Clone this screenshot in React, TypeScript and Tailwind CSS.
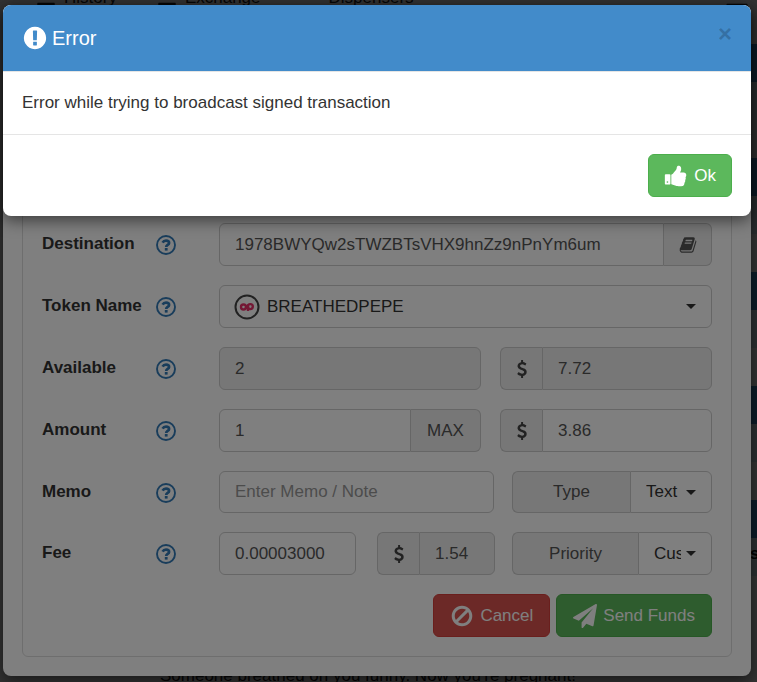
import type { ReactNode } from "react";
import { FaBars } from "react-icons/fa";

const paths = {
  exclamation:
    "M896 128q209 0 385.500 103t279.500 279.500 103 385.500-103 385.500-279.500 279.500-385.500 103-385.500-103-279.500-279.500-103-385.500 103-385.500 279.500-279.500 385.500-103zm128 1247v-190q0-14-9-23.500t-22-9.500h-192q-13 0-23 10t-10 23v190q0 13 10 23t23 10h192q13 0 22-9.500t9-23.500zm-2-344l18-621q0-12-10-18-10-8-24-8h-220q-14 0-24 8-10 6-10 18l17 621q0 10 10 17.500t24 7.500h185q14 0 23.500-7.500t10.500-17.500z",
  thumbsUp:
    "M320 1344q0-26-19-45t-45-19q-27 0-45.500 19t-18.500 45q0 27 18.500 45.500t45.500 18.500q26 0 45-18.500t19-45.500zm160-512v640q0 26-19 45t-45 19h-288q-26 0-45-19t-19-45v-640q0-26 19-45t45-19h288q26 0 45 19t19 45zm1184 0q0 86-55 149 15 44 15 76 3 76-43 137 17 56 0 117-15 57-54 94 9 112-49 181-64 76-197 78h-129q-66 0-144-15.500t-121.500-29-120.500-39.500q-123-43-158-44-26-1-45-19.500t-19-44.500v-641q0-25 18-43.500t43-20.500q24-2 76-59t101-121q68-87 101-120 18-18 31-48t17.500-48.500 13.500-60.500q7-39 12.500-61t19.500-52 34-50q19-19 45-19 46 0 82.500 10.500t60 26 40 40.500 24 45 12 50 5 45 .5 39q0 38-9.500 76t-19 60-27.500 56q-3 6-10 18t-11 22-8 24h277q78 0 135 57t57 135z",
  book:
    "M1703 478q40 57 18 129l-275 906q-19 64-76.500 107.500t-122.500 43.500h-923q-77 0-148.500-53.500t-99.500-131.500q-24-67-2-127 0-4 3-27t4-37q1-8-3-21.500t-3-19.500q2-11 8-21t16.500-23.500 16.500-23.500q23-38 45-91.500t30-91.500q3-10 .5-30t-.5-28q3-11 17-28t17-23q21-36 42-92t25-90q1-9-2.500-32t.5-28q4-13 22-30.500t22-22.500q19-26 42.500-84.500t27.500-96.500q1-8-3-25.500t-2-26.500q2-8 9-18t18-23 17-21q8-12 16.500-30.500t15-35 16-36 19.500-32 26.500-23.500 36-11.500 47.500 5.500l-1 3q38-9 51-9h761q74 0 114 56t18 130l-274 906q-36 119-71.500 153.500t-128.500 34.500h-869q-27 0-38 15-11 16-1 43 24 70 144 70h923q29 0 56-15.500t35-41.500l300-987q7-22 5-57 38 15 59 43zm-1064 2q-4 13 2 22.500t20 9.500h608q13 0 25.500-9.500t16.500-22.500l21-64q4-13-2-22.500t-20-9.500h-608q-13 0-25.500 9.500t-16.500 22.500zm-83 256q-4 13 2 22.500t20 9.500h608q13 0 25.500-9.500t16.500-22.500l21-64q4-13-2-22.500t-20-9.500h-608q-13 0-25.500 9.500t-16.500 22.500z",
  plane:
    "M1764 11q33 24 27 64l-256 1536q-5 29-32 45-14 8-31 8-11 0-24-5l-453-185-242 295q-18 23-49 23-13 0-22-4-19-7-30.500-23.500t-11.500-36.500v-349l864-1059-1069 925-395-162q-37-14-40-55-2-40 32-59l1664-960q15-9 32-9 20 0 36 11z",
  ban:
    "M1440 893q0-161-87-295l-754 753q137 89 297 89 111 0 211.500-43.500t173.500-116.500 116-174.500 43-212.500zm-999 299l755-754q-135-91-300-91-148 0-273 73t-198 199-73 274q0 162 89 299zm1223-299q0 157-61 300t-163.500 246-245 164-298.500 61-298.500-61-245-164-163.500-246-61-300 61-299.500 163.500-245.500 245-164 298.500-61 298.500 61 245 164 163.500 245.500 61 299.500z",
  dollar:
    "M1362 1185q0 153-99.500 263.500t-258.500 136.500v175q0 14-9 23t-23 9h-135q-13 0-22.500-9.500t-9.500-22.500v-175q-66-9-127.500-31t-101.500-44.500-74-48-46.500-37.500-17.500-18q-17-21-2-41l103-135q7-10 23-12 15-2 24 9l2 2q113 99 243 125 37 8 74 8 81 0 142.500-43t61.500-122q0-28-15-53t-33.500-42-58.500-37.500-66-32-80-32.500q-39-16-61.500-25t-61.500-26.500-62.500-31-56.500-35.500-53.500-42.500-43.500-49-35.500-58-21-66.500-8.500-78q0-138 98-242t255-134v-180q0-13 9.500-22.500t22.500-9.500h135q14 0 23 9t9 23v176q57 6 110.500 23t87 33.500 63.500 37.500 39 29 15 14q17 18 5 38l-81 146q-8 15-23 16-14 3-27-7-3-3-14.500-12t-39-26.500-58.500-32-74.500-26-85.500-11.500q-95 0-155 43t-60 111q0 26 8.500 48t29.500 41.500 39.500 33 56 31 60.500 27 70 27.500q53 20 81 31.500t76 35 75.500 42.500 62 50 53 63.500 31.500 76.500 13 94z",
};

const inputClass =
  "h-full w-full min-w-0 border border-[#ccc] px-[15px] text-[#555] placeholder-[#999] outline-none";
const addonClass =
  "flex shrink-0 items-center justify-center border border-[#ccc] bg-[#eee] text-[#555]";
const selectClass =
  "h-full w-full appearance-none border border-[#ccc] bg-white text-[#333] outline-none";

function Icon({ name, className }: { name: keyof typeof paths; className: string }) {
  return (
    <svg viewBox="0 0 1792 1792" fill="currentColor" className={className} aria-hidden="true">
      <path d={paths[name]} />
    </svg>
  );
}

function HelpIcon() {
  return (
    <svg viewBox="0 0 20 20" className="h-5 w-5 text-[#337ab7]" aria-hidden="true">
      <circle cx="10" cy="10" r="9" fill="none" stroke="currentColor" strokeWidth="1.9" />
      <path
        d="M6.600 7.700C7.400 6.100 8.600 5.600 10 5.600c1.700 0 3.100 1 3.100 2.300 0 2-2.900 2-2.900 4"
        fill="none"
        stroke="currentColor"
        strokeWidth="2.700"
      />
      <rect x="8.800" y="13" width="2.800" height="2.600" fill="currentColor" />
    </svg>
  );
}

function Caret() {
  return (
    <svg
      viewBox="0 0 10 5"
      className="pointer-events-none absolute top-[19px] right-4 h-[5px] w-[10px] text-[#333]"
      aria-hidden="true"
    >
      <path d="M0 0h10L5 5z" fill="currentColor" />
    </svg>
  );
}

function Row({
  id,
  label,
  height = "h-[43px]",
  children,
}: {
  id: string;
  label: string;
  height?: string;
  children: ReactNode;
}) {
  return (
    <div className={`flex ${height}`}>
      <div className="flex w-[177px] shrink-0 items-center pt-px">
        <label htmlFor={id} className="w-[114px] pb-[2px] font-bold whitespace-nowrap text-[#333]">
          {label}
        </label>
        <HelpIcon />
      </div>
      <div className="flex min-w-0 flex-1">{children}</div>
    </div>
  );
}

function Dollars({ label, value, readOnly }: { label: string; value: string; readOnly?: boolean }) {
  return (
    <>
      <span className={`${addonClass} w-[42px] rounded-l-md border-r-0`}>
        <Icon name="dollar" className="h-[18px] w-[18px] text-[#444]" />
      </span>
      <input
        aria-label={label}
        defaultValue={value}
        readOnly={readOnly}
        className={`${inputClass} rounded-r-md ${readOnly ? "bg-[#eee]" : "bg-white"}`}
      />
    </>
  );
}

export default function App() {
  return (
    <div className="relative min-h-screen overflow-hidden bg-white pt-[5px] pr-[6px] pb-[6px] pl-[3px] font-['Liberation_Sans',Arial,sans-serif] text-[17px] leading-6">
      {/* ================= PAGE BEHIND ================= */}
      <div className="absolute inset-0 flex flex-col justify-between text-[#222]">
        <nav className="-mt-[14px] flex items-center gap-10 px-9 leading-5">
          <a href="#history" className="flex items-center gap-2">
            <FaBars className="h-5 w-5" /> History
          </a>
          <a href="#exchange" className="flex items-center gap-2">
            <FaBars className="h-5 w-5" /> Exchange
          </a>
          <a href="#dispensers" className="flex items-center gap-2">
            <span className="w-5">···</span> Dispensers
          </a>
          <FaBars className="-mr-7 ml-auto h-6 w-6" />
        </nav>
        <p className="-mb-1 pl-40 leading-5">Someone breathed on you funny. Now you're pregnant!</p>
      </div>
      <div className="absolute top-11 right-0 w-[7px]">
        {[0, 1, 2, 3, 4].map((n) => (
          <div key={n}>
            <div className="h-[38px] bg-[#428bca]" />
            <div className="h-[38px] overflow-hidden bg-[#d9edf7] pt-1 font-bold text-black">
              {n === 4 && "sk"}
            </div>
            <div className="h-[38px] bg-white" />
          </div>
        ))}
      </div>
      <div className="absolute inset-0 bg-black/60" />

      {/* ================= SEND FORM ================= */}
      <section className="relative rounded-lg bg-white p-[19px] pt-[85px] shadow-[0_5px_15px_rgba(0,0,0,0.5)]">
        <form
          className="flex flex-col gap-[19px] rounded-md border border-[#ddd] px-[19px] pt-[132px] pb-[19px]"
          onSubmit={(e) => e.preventDefault()}
        >
          <Row id="destination" label="Destination">
            <input
              id="destination"
              defaultValue="1978BWYQw2sTWZBTsVHX9hnZz9nPnYm6um"
              className={`${inputClass} rounded-l-md bg-white`}
            />
            <button type="button" aria-label="Address book" className={`${addonClass} w-12 rounded-r-md border-l-0`}>
              <Icon name="book" className="h-[18px] w-[18px]" />
            </button>
          </Row>

          <Row id="token" label="Token Name">
            <div className="relative w-full">
              <select id="token" className={`${selectClass} rounded-md pr-10 pl-[47px]`}>
                <option>BREATHEDPEPE</option>
              </select>
              <svg
                viewBox="0 0 26 26"
                className="pointer-events-none absolute top-[9px] left-[15px] h-[26px] w-[26px]"
                fill="none"
                aria-hidden="true"
              >
                <circle cx="13" cy="13" r="11.500" stroke="#444" strokeWidth="2" />
                <g stroke="#e8306a" strokeWidth="2.400">
                  <circle cx="9.500" cy="13" r="2.500" />
                  <circle cx="16.300" cy="12.600" r="2.500" />
                  <path d="M11.500 14.500l3-3.500M14 12v5" />
                </g>
              </svg>
              <Caret />
            </div>
          </Row>

          <Row id="available" label="Available">
            <div className="mr-[19px] flex-1">
              <input id="available" readOnly value="2" className={`${inputClass} rounded-md bg-[#eee]`} />
            </div>
            <div className="flex w-[212px]">
              <Dollars label="Available in dollars" value="7.72" readOnly />
            </div>
          </Row>

          <Row id="amount" label="Amount">
            <div className="mr-[19px] flex flex-1">
              <input id="amount" defaultValue="1" className={`${inputClass} rounded-l-md bg-white`} />
              <button type="button" className={`${addonClass} w-[70px] rounded-r-md border-l-0`}>
                MAX
              </button>
            </div>
            <div className="flex w-[212px]">
              <Dollars label="Amount in dollars" value="3.86" />
            </div>
          </Row>

          <Row id="memo" label="Memo" height="h-[42px]">
            <div className="mr-[18px] flex-1">
              <input id="memo" placeholder="Enter Memo / Note" className={`${inputClass} rounded-md bg-white`} />
            </div>
            <div className="flex w-[200px]">
              <label htmlFor="type" className={`${addonClass} w-[118px] rounded-l-md border-r-0`}>
                Type
              </label>
              <div className="relative flex-1">
                <select id="type" className={`${selectClass} rounded-r-md pr-[30px] pl-[15px]`}>
                  <option>Text</option>
                </select>
                <Caret />
              </div>
            </div>
          </Row>

          <Row id="fee" label="Fee">
            <div className="mr-[21px] flex-1">
              <input id="fee" defaultValue="0.00003000" className={`${inputClass} rounded-md bg-white`} />
            </div>
            <div className="mr-[17px] flex w-[118px]">
              <Dollars label="Fee in dollars" value="1.54" readOnly />
            </div>
            <div className="flex w-[200px]">
              <label htmlFor="priority" className={`${addonClass} w-[126px] rounded-l-md border-r-0`}>
                Priority
              </label>
              <div className="relative flex-1">
                <select id="priority" className={`${selectClass} rounded-r-md pr-[30px] pl-[15px]`}>
                  <option>Custom</option>
                </select>
                <Caret />
              </div>
            </div>
          </Row>

          <div className="flex justify-end gap-[6px] text-white">
            <button
              type="button"
              className="flex h-[43px] items-center gap-[6px] rounded-md border border-[#d43f3a] bg-[#d9534f] px-4"
            >
              <Icon name="ban" className="h-6 w-6" />
              Cancel
            </button>
            <button
              type="submit"
              className="flex h-[43px] items-center gap-[6px] rounded-md border border-[#4cae4c] bg-[#5cb85c] px-4"
            >
              <Icon name="plane" className="h-6 w-6" />
              Send Funds
            </button>
          </div>
        </form>
      </section>
      <div className="absolute inset-0 bg-black/50" />

      {/* ================= ERROR DIALOG ================= */}
      <div
        role="alertdialog"
        aria-labelledby="error-title"
        className="absolute top-[5px] right-[6px] left-[3px] overflow-hidden rounded-lg bg-white shadow-[0_5px_15px_rgba(0,0,0,0.5)]"
      >
        <div className="flex h-[67px] items-center gap-1 border-b border-[#e5e5e5] bg-[#428bca] px-[19px] text-white">
          <Icon name="exclamation" className="h-[26px] w-[26px]" />
          <h4 id="error-title" className="text-xl">
            Error
          </h4>
          <button
            type="button"
            aria-label="Close"
            className="mb-2 ml-auto text-2xl font-bold text-black/20"
          >
            ×
          </button>
        </div>
        <p className="px-[19px] py-[19px] text-[#333]">Error while trying to broadcast signed transaction</p>
        <div className="flex justify-end border-t border-[#e5e5e5] p-[19px]">
          <button
            type="button"
            className="flex h-[43px] items-center gap-[6px] rounded-md border border-[#4cae4c] bg-[#5cb85c] px-[15px] text-white"
          >
            <Icon name="thumbsUp" className="h-6 w-6" />
            Ok
          </button>
        </div>
      </div>
    </div>
  );
}
